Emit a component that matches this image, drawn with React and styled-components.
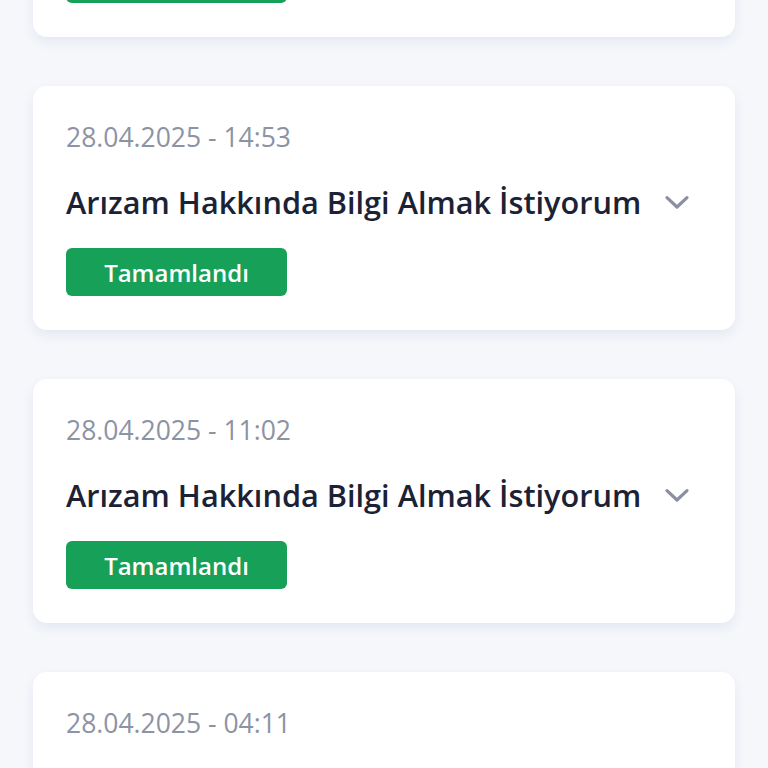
import React from 'react'
import styled, { createGlobalStyle } from 'styled-components'

const GlobalStyle = createGlobalStyle`
  html, body {
    margin: 0;
    padding: 0;
    background: #f5f7fb;
    font-family: 'Open Sans', 'Noto Sans', sans-serif;
    overflow: hidden;
  }
`

const Page = styled.div`
  min-height: 768px;
  background: #f5f7fb;
  padding: 0 33px;
`

const List = styled.div`
  display: flex;
  flex-direction: column;
  gap: 49px;
  margin-top: -207px;
`

const Card = styled.div`
  background: #ffffff;
  border-radius: 14px;
  box-shadow: 0 5px 12px rgba(40, 60, 130, 0.08);
  padding: 34px 33px 34px;
  height: 244px;
  box-sizing: border-box;
`

const DateText = styled.div`
  color: #8c93a4;
  font-size: 26.5px;
  line-height: 34px;
`

const TitleRow = styled.div`
  display: flex;
  align-items: center;
  justify-content: space-between;
  margin-top: 30px;
  padding-right: 10px;
`

const Title = styled.div`
  color: #1c2236;
  font-size: 30.7px;
  font-weight: 600;
  line-height: 36px;
`

const Badge = styled.div`
  margin-top: 28px;
  width: 221px;
  height: 48px;
  border-radius: 6px;
  background: #17a058;
  color: #ffffff;
  font-size: 24px;
  font-weight: 600;
  display: flex;
  align-items: center;
  justify-content: center;
`

const Chevron = () => (
  <svg width="30" height="30" viewBox="0 0 24 24" fill="none" stroke="#8a90a0" strokeWidth="2.6" strokeLinecap="round" strokeLinejoin="round">
    <path d="M4 8.5l8 7.5 8-7.5" />
  </svg>
)

const items = [
  { date: '28.04.2025 - 19:20', title: 'Arızam Hakkında Bilgi Almak İstiyorum' },
  { date: '28.04.2025 - 14:53', title: 'Arızam Hakkında Bilgi Almak İstiyorum' },
  { date: '28.04.2025 - 11:02', title: 'Arızam Hakkında Bilgi Almak İstiyorum' },
  { date: '28.04.2025 - 04:11', title: 'İnternet Bağlantımda Sorun Var' },
]

export default function App() {
  return (
    <>
      <GlobalStyle />
      <Page>
        <List>
          {items.map((it, i) => (
            <Card key={i}>
              <DateText>{it.date}</DateText>
              <TitleRow>
                <Title>{it.title}</Title>
                <Chevron />
              </TitleRow>
              <Badge>Tamamlandı</Badge>
            </Card>
          ))}
        </List>
      </Page>
    </>
  )
}
